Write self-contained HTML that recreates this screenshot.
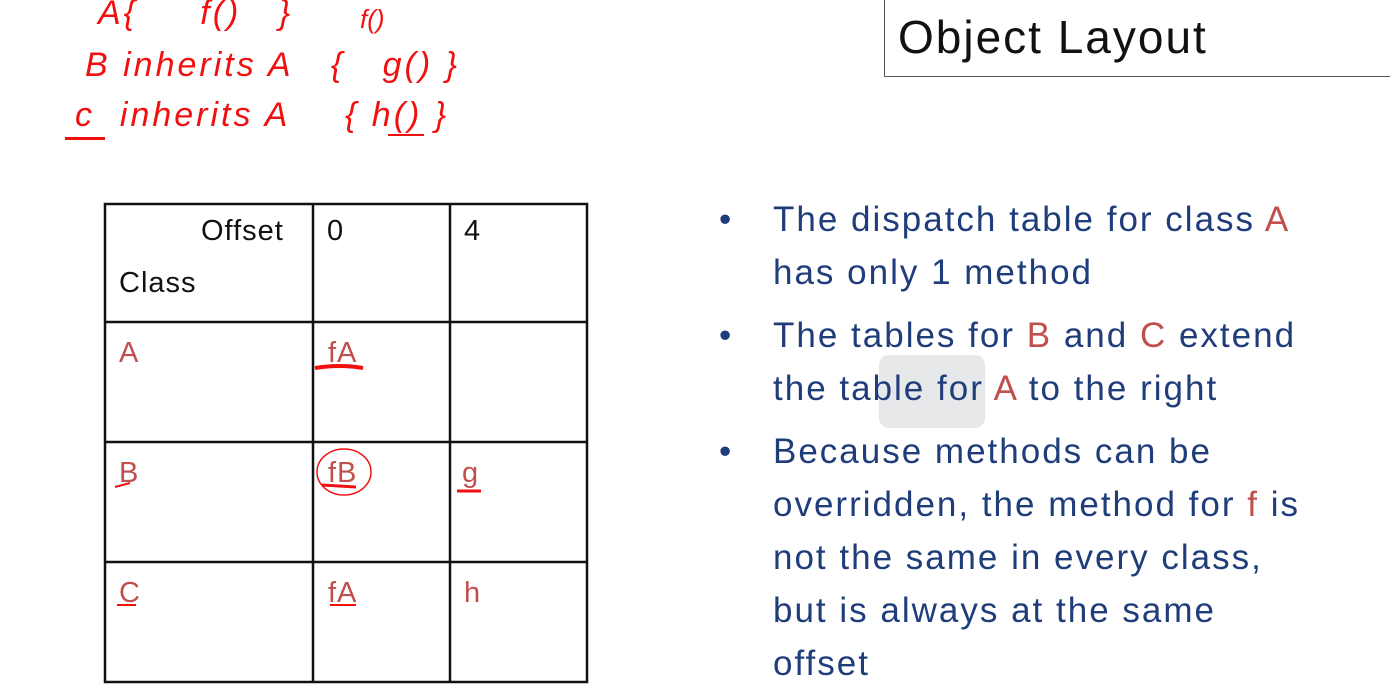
<!DOCTYPE html>
<html><head><style>
body{margin:0;width:1390px;height:700px;background:#fff;position:relative;overflow:hidden;font-family:"Liberation Sans",sans-serif}
.a{position:absolute;white-space:nowrap}
.t{font-size:29px;color:#111;letter-spacing:1px}
.r{color:#c0504d}
.l{font-size:35px;color:#1f3d7a;line-height:53px;letter-spacing:2px}
.hw{font-family:"Liberation Sans",sans-serif;color:#f01010;font-size:34px;font-style:italic;letter-spacing:3px}
</style></head><body>
<div class="a" style="left:884px;top:0;width:1px;height:77px;background:#555"></div>
<div class="a" style="left:884px;top:76px;width:506px;height:1px;background:#555"></div>
<div class="a" style="left:898px;top:10px;font-size:46px;color:#111;letter-spacing:2px">Object Layout</div>

<div class="a hw" style="left:98px;top:-6px">A{&nbsp;&nbsp;&nbsp;&nbsp;&nbsp;f()&nbsp;&nbsp;&nbsp;}</div>
<div class="a hw" style="left:85px;top:46px">B inherits A&nbsp;&nbsp;&nbsp;{&nbsp;&nbsp;&nbsp;g() }</div>
<div class="a hw" style="left:360px;top:4px;font-size:26px;letter-spacing:0">f()</div>
<div class="a hw" style="left:75px;top:96px">c&nbsp;&nbsp;inherits A</div>
<div class="a hw" style="left:345px;top:96px">{ h() }</div>
<div class="a" style="left:65px;top:137px;width:40px;height:3px;background:#f01010"></div>
<div class="a" style="left:388px;top:134px;width:36px;height:2px;background:#f01010"></div>

<svg class="a" style="left:0;top:0" width="700" height="700">
<g stroke="#111" stroke-width="2.5" fill="none">
<rect x="105" y="204" width="482" height="478"/>
<line x1="313" y1="204" x2="313" y2="682"/>
<line x1="450" y1="204" x2="450" y2="682"/>
<line x1="105" y1="322" x2="587" y2="322"/>
<line x1="105" y1="442" x2="587" y2="442"/>
<line x1="105" y1="562" x2="587" y2="562"/>
</g>
<g stroke="#f01010" fill="none">
<path d="M315 368 Q340 364 363 368" stroke-width="4"/>
<ellipse cx="344" cy="472" rx="27" ry="23" stroke-width="1.5"/>
<path d="M322 485 L356 487" stroke-width="3"/>
<path d="M457 491 L481 491" stroke-width="3"/>
<path d="M115 487 L130 483" stroke-width="2"/>
<path d="M117 605 L136 605" stroke-width="2"/>
<path d="M330 605 L356 605" stroke-width="2"/>
</g>
</svg>
<div class="a t" style="left:201px;top:215px">Offset</div>
<div class="a t" style="left:119px;top:267px">Class</div>
<div class="a t" style="left:327px;top:215px">0</div>
<div class="a t" style="left:464px;top:215px">4</div>
<div class="a t r" style="left:119px;top:337px">A</div>
<div class="a t r" style="left:328px;top:337px">fA</div>
<div class="a t r" style="left:119px;top:457px">B</div>
<div class="a t r" style="left:328px;top:457px">fB</div>
<div class="a t r" style="left:462px;top:457px">g</div>
<div class="a t r" style="left:119px;top:577px">C</div>
<div class="a t r" style="left:328px;top:577px">fA</div>
<div class="a t r" style="left:464px;top:577px">h</div>

<div class="a" style="left:879px;top:355px;width:106px;height:73px;background:#e6e8ea;border-radius:10px"></div>

<div class="a l" style="left:719px;top:193px">•</div>
<div class="a l" style="left:719px;top:309px">•</div>
<div class="a l" style="left:719px;top:425px">•</div>
<div class="a l" style="left:773px;top:193px">The dispatch table for class <span class="r">A</span><br>has only 1 method</div>
<div class="a l" style="left:773px;top:309px">The tables for <span class="r">B</span> and <span class="r">C</span> extend<br>the table for <span class="r">A</span> to the right</div>
<div class="a l" style="left:773px;top:425px">Because methods can be<br>overridden, the method for <span class="r">f</span> is<br>not the same in every class,<br>but is always at the same<br>offset</div>
</body></html>
